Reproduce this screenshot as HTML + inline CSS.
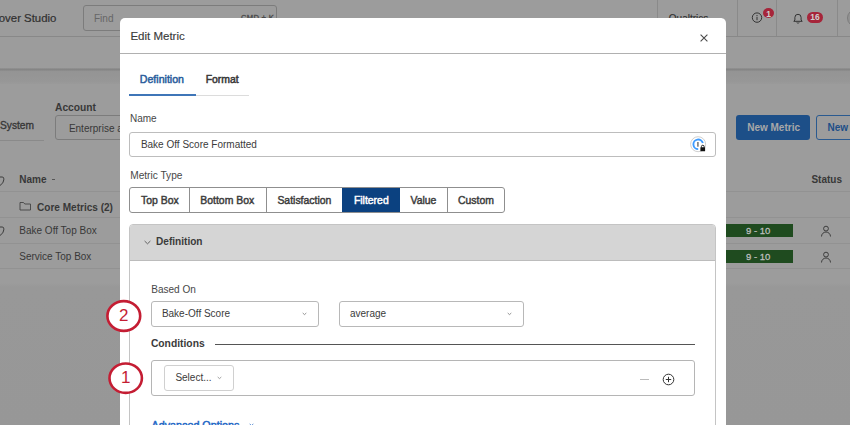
<!DOCTYPE html>
<html><head><meta charset="utf-8">
<style>
*{box-sizing:border-box;margin:0;padding:0}
html,body{width:850px;height:425px;overflow:hidden;background:#9c9c9c;font-family:"Liberation Sans",sans-serif;color:#333}
.a{position:absolute;white-space:nowrap;line-height:1}
.b{font-weight:bold}
.sb{-webkit-text-stroke:0.35px currentColor}
.box{position:absolute}
</style></head><body>
<div id="wrap" style="position:absolute;left:0;top:0;width:850px;height:425px">
<div class="box" style="left:0px;top:68px;width:850px;height:3px;background:linear-gradient(#939393,#858585 50%,#8f8f8f)"></div>
<div class="box" style="left:0px;top:71px;width:850px;height:13px;background:linear-gradient(#949494,#979797 80%,#9a9a9a)"></div>
<div class="a sb" style="right:793.60px;top:13px;font-size:11.4px;color:#303030;-webkit-text-stroke-width:0.2px">over Studio</div>
<div class="box" style="left:83px;top:5px;width:194px;height:26px;border:1px solid #7c7c7c;border-radius:3px"></div>
<div class="a " style="left:94.00px;top:14px;font-size:10px;color:#666;">Find</div>
<div class="a sb" style="left:241.00px;top:14px;font-size:7.6px;color:#4a4a4a;letter-spacing:0.3px">CMD + K</div>
<div class="box" style="left:0px;top:36px;width:850px;height:1px;background:#888"></div>
<div class="box" style="left:657px;top:0px;width:1px;height:36px;background:#8a8a8a"></div>
<div class="box" style="left:737px;top:0px;width:1px;height:36px;background:#8a8a8a"></div>
<div class="box" style="left:776px;top:0px;width:1px;height:36px;background:#8a8a8a"></div>
<div class="box" style="left:837px;top:0px;width:1px;height:36px;background:#8a8a8a"></div>
<div class="a sb" style="left:668.80px;top:14px;font-size:10px;color:#303030;-webkit-text-stroke-width:0.15px">Qualtrics</div>
<svg class="box" style="left:716.5px;top:16.5px" width="7" height="5" viewBox="0 0 7 5"><path d="M1 1 L3.5 3.5 L6 1" fill="none" stroke="#444" stroke-width="1"/></svg>
<svg class="box" style="left:751px;top:12px" width="12" height="12" viewBox="0 0 12 12"><circle cx="6" cy="5.6" r="4.7" fill="none" stroke="#333" stroke-width="1"/><rect x="5.5" y="3" width="1" height="1" fill="#333"/><rect x="5.5" y="4.8" width="1" height="3.4" fill="#333"/></svg>
<div class="box" style="left:763px;top:8.3px;width:11px;height:10px;border-radius:50%;background:#a6253a"></div>
<div class="a b" style="left:766.20px;top:10px;font-size:8.5px;color:#cfcfcf;">1</div>
<svg class="box" style="left:792px;top:12px" width="12" height="12" viewBox="0 0 12 12"><path d="M1.8 9.3 L2.9 8 V5.4 A3.1 3.1 0 0 1 9.1 5.4 V8 L10.2 9.3 Z M4.9 10.5 A1.2 1.2 0 0 0 7.1 10.5" fill="none" stroke="#333" stroke-width="1"/></svg>
<div class="box" style="left:807px;top:12px;width:16px;height:10.6px;border-radius:6px;background:#a6253a"></div>
<div class="a b" style="left:810.20px;top:13px;font-size:8.5px;color:#cfcfcf;">16</div>
<div class="box" style="left:847px;top:9px;width:18px;height:18px;border-radius:50%;background:#929292;border:1.5px solid #7c7c7c"></div>
<div class="a sb" style="left:0.00px;top:121px;font-size:10.2px;color:#383838;">System</div>
<div class="box" style="left:0px;top:140px;width:44px;height:1px;background:#8a8a8a"></div>
<div class="a b" style="left:55.00px;top:103px;font-size:10.25px;color:#383838;">Account</div>
<div class="box" style="left:55px;top:115px;width:120px;height:25px;border:1px solid #7c7c7c;border-radius:3px"></div>
<div class="a " style="left:68.90px;top:124px;font-size:10px;color:#383838;">Enterprise a</div>
<div class="box" style="left:736px;top:115px;width:74px;height:25px;border-radius:3px;background:#1d4f88"></div>
<div class="a b" style="left:747.20px;top:123px;font-size:10px;color:#a8a8a8;">New Metric</div>
<div class="box" style="left:816px;top:115px;width:60px;height:25px;border:1px solid #2a5a90;border-radius:3px"></div>
<div class="a b" style="left:827.50px;top:123px;font-size:10px;color:#1d4f88;">New</div>
<div class="a b" style="left:19.30px;top:175px;font-size:10px;color:#383838;">Name</div>
<div class="box" style="left:51.5px;top:179px;width:3px;height:1px;background:#555"></div>
<div class="a b" style="left:811.40px;top:175px;font-size:10px;color:#383838;">Status</div>
<div class="box" style="left:0px;top:191px;width:850px;height:1px;background:#929292"></div>
<div class="box" style="left:0px;top:217px;width:850px;height:1px;background:#929292"></div>
<div class="box" style="left:0px;top:243px;width:850px;height:1px;background:#929292"></div>
<div class="box" style="left:0px;top:268px;width:850px;height:1px;background:#929292"></div>
<svg class="box" style="left:19px;top:201px" width="13" height="10" viewBox="0 0 13 10"><path d="M1 1.5 H4.5 L5.8 3 H11.5 V9 H1 Z" fill="none" stroke="#444" stroke-width="0.9"/></svg>
<div class="a b" style="left:37.00px;top:203px;font-size:10.06px;color:#383838;">Core Metrics (2)</div>
<div class="a " style="left:19.30px;top:226px;font-size:10px;color:#383838;">Bake Off Top Box</div>
<div class="a " style="left:19.30px;top:252px;font-size:10px;color:#383838;">Service Top Box</div>
<svg class="box" style="left:0;top:175.5px" width="8" height="11" viewBox="0 0 8 11"><path d="M0 1 H2.2 Q3.8 1 3.8 2.8 V3.8 Q3.8 7 0 9.5" fill="none" stroke="#3a3a3a" stroke-width="1"/></svg>
<svg class="box" style="left:0;top:225.5px" width="8" height="11" viewBox="0 0 8 11"><path d="M0 1 H2.2 Q3.8 1 3.8 2.8 V3.8 Q3.8 7 0 9.5" fill="none" stroke="#3a3a3a" stroke-width="1"/></svg>
<div class="box" style="left:700px;top:224px;width:93px;height:13px;background:#1f4b1f"></div>
<div class="a sb" style="left:746.00px;top:226px;font-size:9.5px;color:#bdbdbd;-webkit-text-stroke-width:0.3px">9 - 10</div>
<svg class="box" style="left:820px;top:225px" width="12" height="12" viewBox="0 0 12 12"><circle cx="6" cy="3.6" r="2.4" fill="none" stroke="#333" stroke-width="0.9"/><path d="M1.5 11.5 A4.5 4.5 0 0 1 10.5 11.5" fill="none" stroke="#333" stroke-width="0.9"/></svg>
<div class="box" style="left:700px;top:250px;width:93px;height:13px;background:#1f4b1f"></div>
<div class="a sb" style="left:746.00px;top:252px;font-size:9.5px;color:#bdbdbd;-webkit-text-stroke-width:0.3px">9 - 10</div>
<svg class="box" style="left:820px;top:251px" width="12" height="12" viewBox="0 0 12 12"><circle cx="6" cy="3.6" r="2.4" fill="none" stroke="#333" stroke-width="0.9"/><path d="M1.5 11.5 A4.5 4.5 0 0 1 10.5 11.5" fill="none" stroke="#333" stroke-width="0.9"/></svg>
<div class="box" style="left:0px;top:283px;width:850px;height:142px;background:linear-gradient(#9c9c9c,#989898 4px,#979797)"></div>
<div class="box" style="left:120px;top:18px;width:606px;height:430px;background:#fff;border-radius:5px"></div>
<div class="a sb" style="left:130.40px;top:31px;font-size:11.5px;color:#3b3b3b;-webkit-text-stroke-width:0.15px">Edit Metric</div>
<svg class="box" style="left:700px;top:33.5px" width="8" height="8" viewBox="0 0 8 8"><path d="M0.6 0.6 L7.4 7.4 M7.4 0.6 L0.6 7.4" stroke="#4a4a4a" stroke-width="1.1"/></svg>
<div class="box" style="left:120px;top:53px;width:606px;height:1px;background:#b0b0b0"></div>
<div class="a sb" style="left:139.80px;top:74px;font-size:10.6px;color:#2a5d9c;-webkit-text-stroke-width:0.5px">Definition</div>
<div class="a sb" style="left:205.70px;top:75px;font-size:10.45px;color:#383838;-webkit-text-stroke-width:0.5px">Format</div>
<div class="box" style="left:129px;top:95px;width:120px;height:1px;background:#dcdcdc"></div>
<div class="box" style="left:129px;top:94px;width:67px;height:2px;background:#3f76b8"></div>
<div class="a " style="left:130.00px;top:114px;font-size:10px;color:#474747;">Name</div>
<div class="box" style="left:129px;top:131.5px;width:587px;height:25.5px;border:1px solid #bdbdbd;border-radius:3px"></div>
<div class="a " style="left:140.90px;top:140px;font-size:10px;color:#3b3b3b;">Bake Off Score Formatted</div>
<svg class="box" style="left:690px;top:136px" width="17" height="17" viewBox="0 0 17 17">
 <circle cx="8.1" cy="8.2" r="7.5" fill="#fff" stroke="#cfcfcf" stroke-width="1"/>
 <path d="M12.84 7.06 A4.8 4.8 0 1 0 8.2 13.1" fill="none" stroke="#3d9bff" stroke-width="1.9"/>
 <rect x="7.1" y="6" width="1.6" height="4.7" fill="#7a7a7a"/>
 <rect x="10.4" y="11.3" width="4.7" height="4" rx="0.5" fill="#111"/>
 <path d="M11.4 11.6 V10.6 A1.35 1.35 0 0 1 14.1 10.6 V11.6" fill="none" stroke="#111" stroke-width="0.9"/>
</svg>
<div class="a " style="left:130.20px;top:171px;font-size:10.17px;color:#474747;">Metric Type</div>
<div class="box" style="left:129px;top:187px;width:376px;height:26px;border:1px solid #8f8f8f;border-radius:3px;overflow:hidden"><div class="box" style="left:59px;top:0px;width:1px;height:24px;background:#8f8f8f"></div>
<div class="box" style="left:136px;top:0px;width:1px;height:24px;background:#8f8f8f"></div>
<div class="box" style="left:212px;top:0px;width:58px;height:24px;background:#0b4180"></div>
<div class="box" style="left:317px;top:0px;width:1px;height:24px;background:#8f8f8f"></div>
</div>
<div class="a sb" style="left:141.00px;top:196px;font-size:10.45px;color:#3c3c3c;-webkit-text-stroke-width:0.45px">Top Box</div>
<div class="a sb" style="left:200.30px;top:196px;font-size:10.45px;color:#3c3c3c;-webkit-text-stroke-width:0.45px">Bottom Box</div>
<div class="a sb" style="left:277.40px;top:196px;font-size:10.45px;color:#3c3c3c;-webkit-text-stroke-width:0.45px">Satisfaction</div>
<div class="a sb" style="left:353.90px;top:196px;font-size:10.45px;color:#fff;-webkit-text-stroke-width:0.45px">Filtered</div>
<div class="a sb" style="left:410.50px;top:196px;font-size:10.45px;color:#3c3c3c;-webkit-text-stroke-width:0.45px">Value</div>
<div class="a sb" style="left:458.00px;top:196px;font-size:10.45px;color:#3c3c3c;-webkit-text-stroke-width:0.45px">Custom</div>
<div class="box" style="left:129px;top:223.5px;width:587px;height:240px;border:1px solid #c4c4c4;border-radius:4px 4px 0 0;overflow:hidden"><div class="box" style="left:0px;top:0px;width:585px;height:36px;background:#d5d5d5;border-bottom:1px solid #bcbcbc"></div>
</div>
<svg class="box" style="left:143.5px;top:240px" width="7" height="5" viewBox="0 0 7 5"><path d="M0.6 1 L3.5 3.8 L6.4 1" fill="none" stroke="#555" stroke-width="0.9"/></svg>
<div class="a b" style="left:156.00px;top:237px;font-size:10.1px;color:#3b3b3b;">Definition</div>
<div class="a " style="left:151.20px;top:285px;font-size:10.05px;color:#474747;">Based On</div>
<div class="box" style="left:150.5px;top:301px;width:168px;height:26px;border:1px solid #b8b8b8;border-radius:3px"></div>
<div class="a " style="left:161.90px;top:309px;font-size:10px;color:#3b3b3b;">Bake-Off Score</div>
<svg class="box" style="left:302px;top:311.5px" width="5" height="4" viewBox="0 0 5 4"><path d="M0.7 1 L2.5 2.6 L4.3 1" fill="none" stroke="#777" stroke-width="0.8"/></svg>
<div class="box" style="left:338.5px;top:301px;width:185px;height:26px;border:1px solid #b8b8b8;border-radius:3px"></div>
<div class="a " style="left:350.00px;top:309px;font-size:10px;color:#3b3b3b;">average</div>
<svg class="box" style="left:507px;top:311.5px" width="5" height="4" viewBox="0 0 5 4"><path d="M0.7 1 L2.5 2.6 L4.3 1" fill="none" stroke="#777" stroke-width="0.8"/></svg>
<div class="a b" style="left:150.90px;top:339px;font-size:10.3px;color:#3b3b3b;">Conditions</div>
<div class="box" style="left:215px;top:344px;width:479.5px;height:1px;background:#555"></div>
<div class="box" style="left:150.5px;top:360px;width:544px;height:36px;border:1px solid #b5b5b5;border-radius:3px"></div>
<div class="box" style="left:164px;top:364.5px;width:69.5px;height:26px;border:1px solid #d0d0d0;border-radius:3px"></div>
<div class="a " style="left:175.40px;top:373px;font-size:10px;color:#3b3b3b;">Select...</div>
<svg class="box" style="left:217px;top:376px" width="5" height="4" viewBox="0 0 5 4"><path d="M0.7 1 L2.5 2.6 L4.3 1" fill="none" stroke="#888" stroke-width="0.8"/></svg>
<div class="box" style="left:639.5px;top:378.5px;width:9px;height:1px;background:#bbb"></div>
<svg class="box" style="left:662px;top:373px" width="13" height="13" viewBox="0 0 13 13"><circle cx="6.5" cy="6.5" r="5.3" fill="none" stroke="#333" stroke-width="1"/><path d="M6.5 3.8 V9.2 M3.8 6.5 H9.2" stroke="#333" stroke-width="1"/></svg>
<div class="a sb" style="left:151.50px;top:420px;font-size:10.77px;color:#2368c6;-webkit-text-stroke-width:0.5px">Advanced Options</div>
<svg class="box" style="left:248.5px;top:422.5px" width="5" height="4" viewBox="0 0 5 4"><path d="M0.7 1 L2.5 2.6 L4.3 1" fill="none" stroke="#2368c6" stroke-width="0.8"/></svg>
<svg class="box" style="left:100px;top:295px" width="50" height="45" viewBox="0 0 50 45"><ellipse cx="23.8" cy="21" rx="16.4" ry="14.9" fill="#fff" stroke="#c41d33" stroke-width="2.6"/></svg>
<div class="a " style="left:118.90px;top:307px;font-size:17px;color:#c41d33;">2</div>
<svg class="box" style="left:100px;top:355px" width="50" height="45" viewBox="0 0 50 45"><ellipse cx="25.7" cy="23.2" rx="16.2" ry="14.7" fill="#fff" stroke="#c41d33" stroke-width="2.6"/></svg>
<div class="a " style="left:121.00px;top:369px;font-size:17px;color:#c41d33;">1</div>
</div></body></html>
